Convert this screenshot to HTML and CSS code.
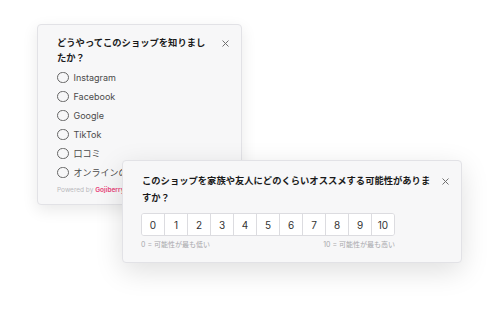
FILE: index.html
```html
<!DOCTYPE html>
<html lang="ja">
<head>
  <meta charset="UTF-8" />
  <meta name="viewport" content="width=device-width, initial-scale=1.0"/>
  <title>Survey widgets</title>
  <link rel="stylesheet" href="styles.css">
</head>
<body>
  <div class="stage">
    <!-- Survey: how did you find us -->
    <section class="card card-source">
      <div class="card-head">
        <h2 class="card-title">どうやってこのショップを知りまし<br>たか？</h2>
        <button class="close" aria-label="閉じる">
          <svg width="7" height="7" viewBox="0 0 7 7"><path d="M0.5 0.5L6.5 6.5M6.5 0.5L0.5 6.5" stroke="#707070" stroke-width="1" fill="none"/></svg>
        </button>
      </div>
      <ul class="options">
        <li><span class="radio"></span>Instagram</li>
        <li><span class="radio"></span>Facebook</li>
        <li><span class="radio"></span>Google</li>
        <li><span class="radio"></span>TikTok</li>
        <li><span class="radio"></span>口コミ</li>
        <li><span class="radio"></span>オンラインの広告</li>
      </ul>
      <p class="powered">Powered by <span class="brand">Gojiberry</span></p>
    </section>

    <!-- Survey: NPS -->
    <section class="card card-nps">
      <div class="card-head">
        <h2 class="card-title">このショップを家族や友人にどのくらいオススメする可能性がありま<br>すか？</h2>
        <button class="close" aria-label="閉じる">
          <svg width="7" height="7" viewBox="0 0 7 7"><path d="M0.5 0.5L6.5 6.5M6.5 0.5L0.5 6.5" stroke="#707070" stroke-width="1" fill="none"/></svg>
        </button>
      </div>
      <div class="scale">
        <button>0</button>
        <button>1</button>
        <button>2</button>
        <button>3</button>
        <button>4</button>
        <button>5</button>
        <button>6</button>
        <button>7</button>
        <button>8</button>
        <button>9</button>
        <button>10</button>
      </div>
      <div class="scale-labels">
        <span>0 = 可能性が最も低い</span>
        <span>10 = 可能性が最も高い</span>
      </div>
    </section>
  </div>
</body>
</html>
```

FILE: styles.css
```css
* {
  margin: 0;
  padding: 0;
  box-sizing: border-box;
}
body {
  font-family: Inter, "Noto Sans CJK JP", sans-serif;
  background: #ffffff;
  color: #222;
  width: 500px;
  height: 314px;
  overflow: hidden;
}

.stage {
  position: relative;
  height: 314px;
  padding: 24px 0 0 37px;
}

/* Shared card */
.card {
  background: #f7f7f8;
  border: 1px solid #e2e2e6;
  border-radius: 4px;
}
.card-head {
  display: flex;
  align-items: flex-start;
  justify-content: space-between;
}
.card-title {
  font-size: 9.3px;
  font-weight: 700;
  color: #1a1a1a;
  white-space: nowrap;
}
.close {
  border: none;
  background: none;
  display: flex;
  cursor: pointer;
}

/* Source survey */
.card-source {
  width: 205px;
  height: 181px;
  padding: 10px 12px 0 19px;
  box-shadow: 0 5px 16px rgba(0, 0, 0, 0.09);
}
.card-source .card-title {
  line-height: 15px;
}
.card-source .close {
  margin-top: 5px;
}
.options {
  list-style: none;
  margin-top: 3px;
}
.options li {
  display: flex;
  align-items: center;
  height: 19px;
  font-size: 9px;
  color: #4a4a4a;
  white-space: nowrap;
}
.radio {
  width: 11.5px;
  height: 11.5px;
  border: 1.2px solid #666;
  border-radius: 50%;
  margin-right: 5px;
}
.powered {
  margin-top: 4px;
  font-size: 6.5px;
  line-height: 9px;
  color: #b8b8bc;
}
.brand {
  color: #e8457a;
  font-weight: 600;
}

/* NPS survey */
.card-nps {
  position: absolute;
  left: 122px;
  top: 160px;
  width: 340px;
  height: 103px;
  padding: 12px 12px 0 18px;
  box-shadow: 0 8px 28px rgba(0, 0, 0, 0.13);
}
.card-nps .card-title {
  line-height: 16.5px;
  padding-left: 1px;
}
.card-nps .close {
  margin-top: 5px;
}
.scale {
  display: flex;
  width: 254px;
  height: 23px;
  margin-top: 7px;
  border: 1px solid #dcdce0;
  border-radius: 3px;
  overflow: hidden;
  background: #fff;
}
.scale button {
  flex: 1;
  border: none;
  border-right: 1px solid #dcdce0;
  background: #fff;
  font-family: Inter, sans-serif;
  font-size: 10px;
  color: #333;
}
.scale button:last-child {
  border-right: none;
}
.scale-labels {
  display: flex;
  justify-content: space-between;
  width: 254px;
  margin-top: 4px;
  font-size: 7px;
  line-height: 9px;
  color: #a8a8ac;
}
```
